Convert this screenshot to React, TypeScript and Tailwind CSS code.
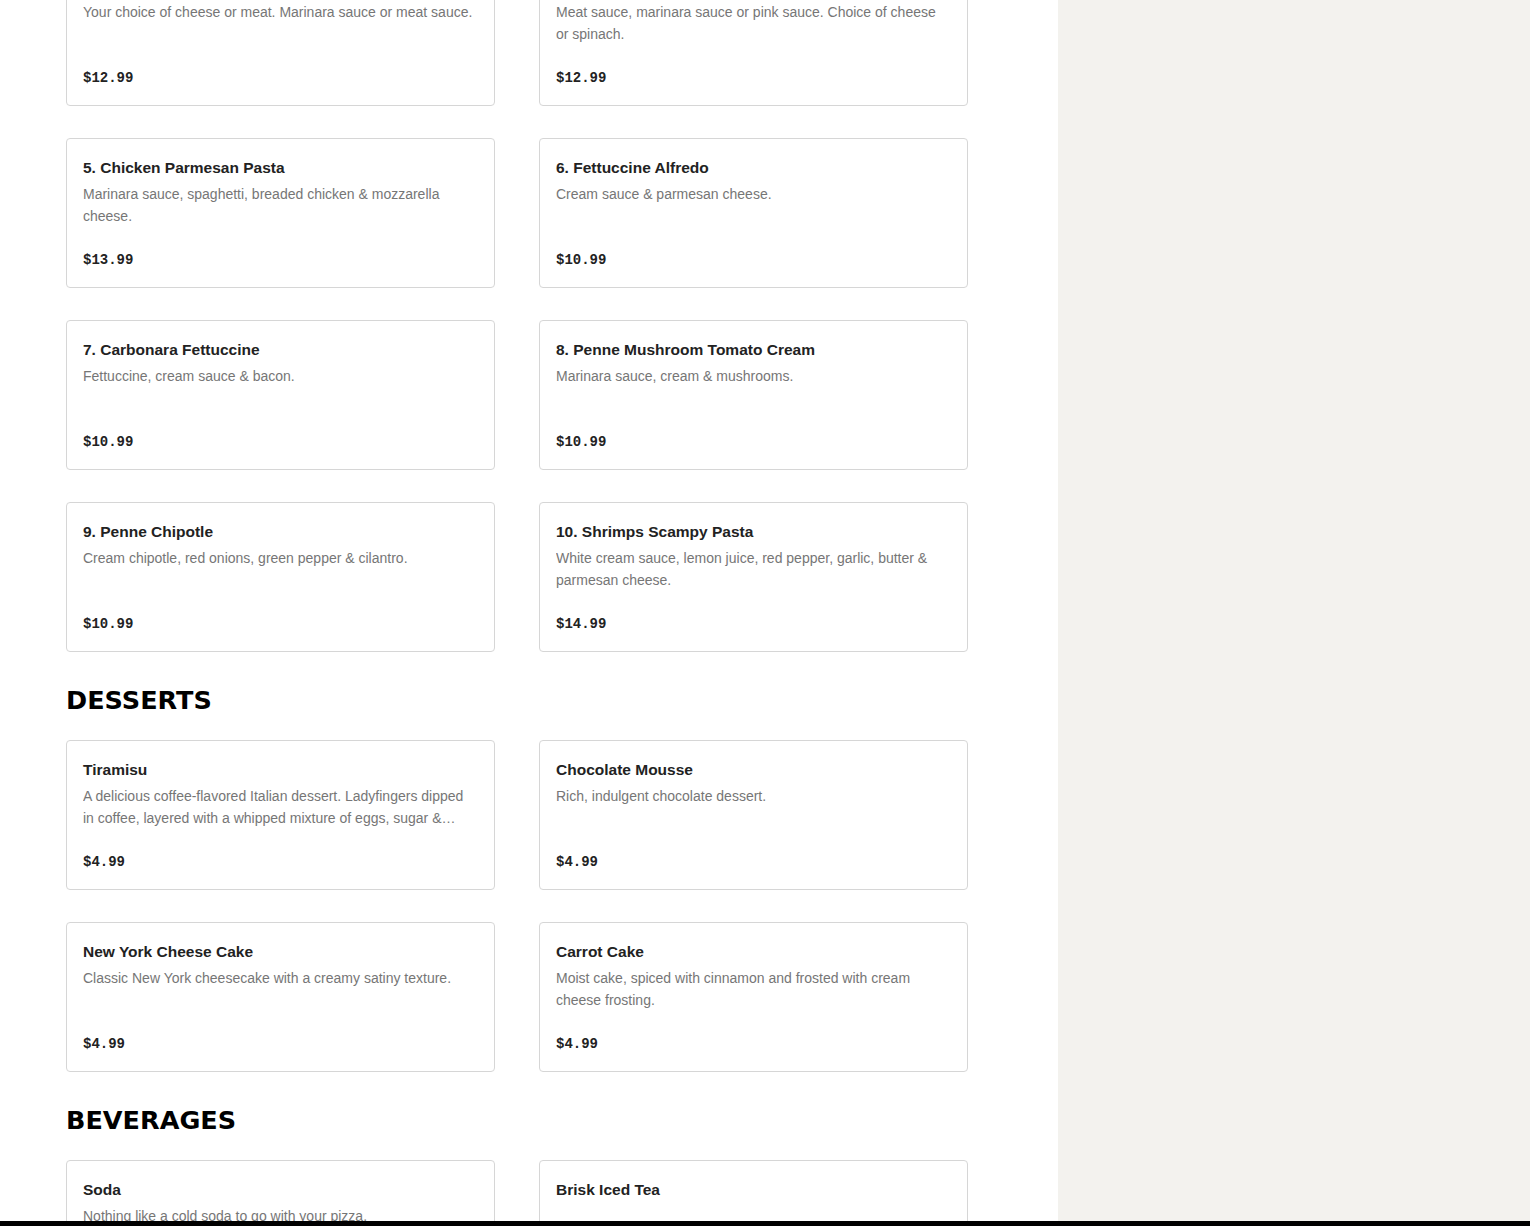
const pasta = [
  { name: "3. Spaghetti", desc: "Your choice of cheese or meat. Marinara sauce or meat sauce.", price: "$12.99" },
  { name: "4. Lasagna", desc: "Meat sauce, marinara sauce or pink sauce. Choice of cheese or spinach.", price: "$12.99" },
  { name: "5. Chicken Parmesan Pasta", desc: "Marinara sauce, spaghetti, breaded chicken & mozzarella cheese.", price: "$13.99" },
  { name: "6. Fettuccine Alfredo", desc: "Cream sauce & parmesan cheese.", price: "$10.99" },
  { name: "7. Carbonara Fettuccine", desc: "Fettuccine, cream sauce & bacon.", price: "$10.99" },
  { name: "8. Penne Mushroom Tomato Cream", desc: "Marinara sauce, cream & mushrooms.", price: "$10.99" },
  { name: "9. Penne Chipotle", desc: "Cream chipotle, red onions, green pepper & cilantro.", price: "$10.99" },
  { name: "10. Shrimps Scampy Pasta", desc: "White cream sauce, lemon juice, red pepper, garlic, butter & parmesan cheese.", price: "$14.99" },
]

const desserts = [
  { name: "Tiramisu", desc: "A delicious coffee-flavored Italian dessert. Ladyfingers dipped in coffee, layered with a whipped mixture of eggs, sugar & mascarpone cheese, flavored with cocoa.", price: "$4.99" },
  { name: "Chocolate Mousse", desc: "Rich, indulgent chocolate dessert.", price: "$4.99" },
  { name: "New York Cheese Cake", desc: "Classic New York cheesecake with a creamy satiny texture.", price: "$4.99" },
  { name: "Carrot Cake", desc: "Moist cake, spiced with cinnamon and frosted with cream cheese frosting.", price: "$4.99" },
]

const beverages = [
  { name: "Soda", desc: "Nothing like a cold soda to go with your pizza.", price: "$2.49" },
  { name: "Brisk Iced Tea", desc: "", price: "$2.49" },
]

type Item = { name: string; desc: string; price: string }

function ItemCard({ item }: { item: Item }) {
  return (
    <div className="flex h-[150px] flex-col rounded-[4px] border border-[#d6d6d6] bg-white px-4 pt-[17px] pb-[17px]">
      <div className="text-[15.5px] leading-6 font-semibold text-[#222]">{item.name}</div>
      <p className="mt-[3px] line-clamp-2 min-h-[44px] text-[14px] leading-[22px] text-[#767676]">{item.desc}</p>
      <div className="mt-auto font-['Liberation_Mono',monospace] text-[14px] leading-5 font-bold text-[#222]">
        {item.price}
      </div>
    </div>
  )
}

function Grid({ items, className = "" }: { items: Item[]; className?: string }) {
  return (
    <div className={`grid grid-cols-[429px_429px] gap-x-[44px] gap-y-8 ${className}`}>
      {items.map((it) => (
        <ItemCard key={it.name} item={it} />
      ))}
    </div>
  )
}

function Heading({ children }: { children: React.ReactNode }) {
  return (
    <h2 className="mt-7 mb-5 pt-[1px] font-['DejaVu_Sans',sans-serif] text-[25.5px] leading-[39px] font-bold text-black">
      {children}
    </h2>
  )
}

export default function App() {
  return (
    <div className="flex min-h-screen font-['Liberation_Sans',Arial,sans-serif]">
      {/* ── Menu column ── */}
      <main className="w-[1058px] shrink-0 bg-white px-[66px] pb-10">
        <Grid items={pasta} className="-mt-[44px]" />

        <Heading>DESSERTS</Heading>
        <Grid items={desserts} />

        <Heading>BEVERAGES</Heading>
        <Grid items={beverages} />
      </main>

      {/* ── Side panel ── */}
      <aside className="flex-1 bg-[#f3f2ee]" />

      <div className="fixed inset-x-0 bottom-0 h-[5px] bg-black" />
    </div>
  )
}
